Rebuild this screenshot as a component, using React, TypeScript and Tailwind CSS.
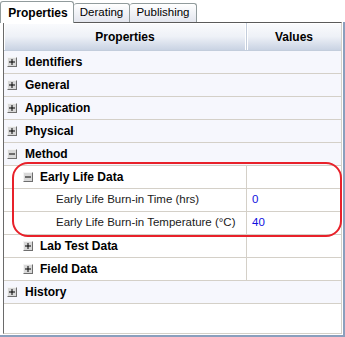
import { Fragment } from 'react';

type Row = {
  label: string;
  level: 0 | 1 | 2;
  sign?: '+' | '-';
  value?: string;
};

const ROWS: Row[] = [
  { label: 'Identifiers', level: 0, sign: '+' },
  { label: 'General', level: 0, sign: '+' },
  { label: 'Application', level: 0, sign: '+' },
  { label: 'Physical', level: 0, sign: '+' },
  { label: 'Method', level: 0, sign: '-' },
  { label: 'Early Life Data', level: 1, sign: '-' },
  { label: 'Early Life Burn-in Time (hrs)', level: 2, value: '0' },
  { label: 'Early Life Burn-in Temperature (°C)', level: 2, value: '40' },
  { label: 'Lab Test Data', level: 1, sign: '+' },
  { label: 'Field Data', level: 1, sign: '+' },
  { label: 'History', level: 0, sign: '+' },
];

function ExpandBox({ sign }: { sign: '+' | '-' }) {
  return (
    <span className="flex h-[10px] w-[10px] shrink-0 items-center justify-center border border-t-[#f4f4f4] border-l-[#f4f4f4] border-r-[#6e6e6e] border-b-[#6e6e6e] bg-[#d8d8d8]">
      <svg width="6" height="6" viewBox="0 0 6 6">
        <rect x="0" y="2.5" width="6" height="1" fill="#000" />
        {sign === '+' && <rect x="2.5" y="0" width="1" height="6" fill="#000" />}
      </svg>
    </span>
  );
}

function TreeRow({ row }: { row: Row }) {
  if (row.level === 0) {
    return (
      <div className="flex h-[23px] items-center border-b border-[#d4d0c8] bg-[#f6f7fd] pl-[3px]">
        <ExpandBox sign={row.sign!} />
        <span className="ml-[8px] text-[12px] font-bold text-black">{row.label}</span>
      </div>
    );
  }
  return (
    <div className="flex h-[23px] border-b border-[#d4d0c8] bg-white">
      <div className="flex w-[243px] items-center border-r border-[#d4d0c8]">
        {row.level === 1 ? (
          <div className="flex items-center pl-[19px]">
            <ExpandBox sign={row.sign!} />
            <span className="ml-[7px] text-[12px] font-bold text-black">{row.label}</span>
          </div>
        ) : (
          <span className="pl-[52px] text-[11.5px] text-[#1a1a1a]">{row.label}</span>
        )}
      </div>
      <div className="flex flex-1 items-center pl-[5px] text-[11.5px] text-[#1010e0]">{row.value}</div>
    </div>
  );
}

export default function App() {
  return (
    <div
      className="relative h-[337px] w-[345px] overflow-hidden bg-white"
      style={{ fontFamily: '"Liberation Sans", Arial, sans-serif' }}
    >
      {/* tab strip */}
      <div className="flex h-[22px] items-end">
        <div className="relative z-10 -mb-px flex h-[22px] w-[74px] items-center justify-center rounded-t-[3px] border border-b-0 border-[#919b9c] bg-white pl-[2px] text-[12px] font-bold text-black">
          Properties
        </div>
        <div className="flex h-[19px] w-[56px] items-center justify-center rounded-t-[3px] border border-b-0 border-l-0 border-[#919b9c] bg-gradient-to-b from-white to-[#e3e6ee] text-[11.5px] text-black">
          Derating
        </div>
        <div className="flex h-[19px] w-[67px] items-center justify-center rounded-t-[3px] border border-b-0 border-l-0 border-[#919b9c] bg-gradient-to-b from-white to-[#e3e6ee] text-[11.5px] text-black">
          Publishing
        </div>
      </div>

      {/* tab page */}
      <div className="h-[315px] border-r-2 border-b-2 border-[#8a9fbd] pl-[3px] pt-0 pr-[1px] pb-[1px]">
        <div className="flex h-full flex-col border-t border-l border-r border-b border-t-[#5a5a5a] border-l-[#6a6a6a] border-r-[#d4d0c8] border-b-[#d4d0c8] bg-white">
          {/* header */}
          <div className="flex h-[28px] shrink-0 border-b border-[#c3cddc] bg-gradient-to-b from-[#fafbfd] via-[#eef1f7] to-[#c9d3e3] text-[12px] font-bold text-black">
            <div className="flex w-[243px] items-center justify-center border-r border-[#c3cddc] shadow-[inset_-1px_0_0_#ffffff,inset_1px_1px_0_#ffffff]">
              Properties
            </div>
            <div className="flex flex-1 items-center justify-center shadow-[inset_1px_1px_0_#ffffff]">Values</div>
          </div>
          {ROWS.map((r) => (
            <Fragment key={r.label}>
              <TreeRow row={r} />
            </Fragment>
          ))}
        </div>
      </div>

      {/* highlight annotation */}
      <div className="pointer-events-none absolute left-[12px] top-[162px] h-[75px] w-[330px] rounded-[16px] border-2 border-[#e8212a]" />
    </div>
  );
}
